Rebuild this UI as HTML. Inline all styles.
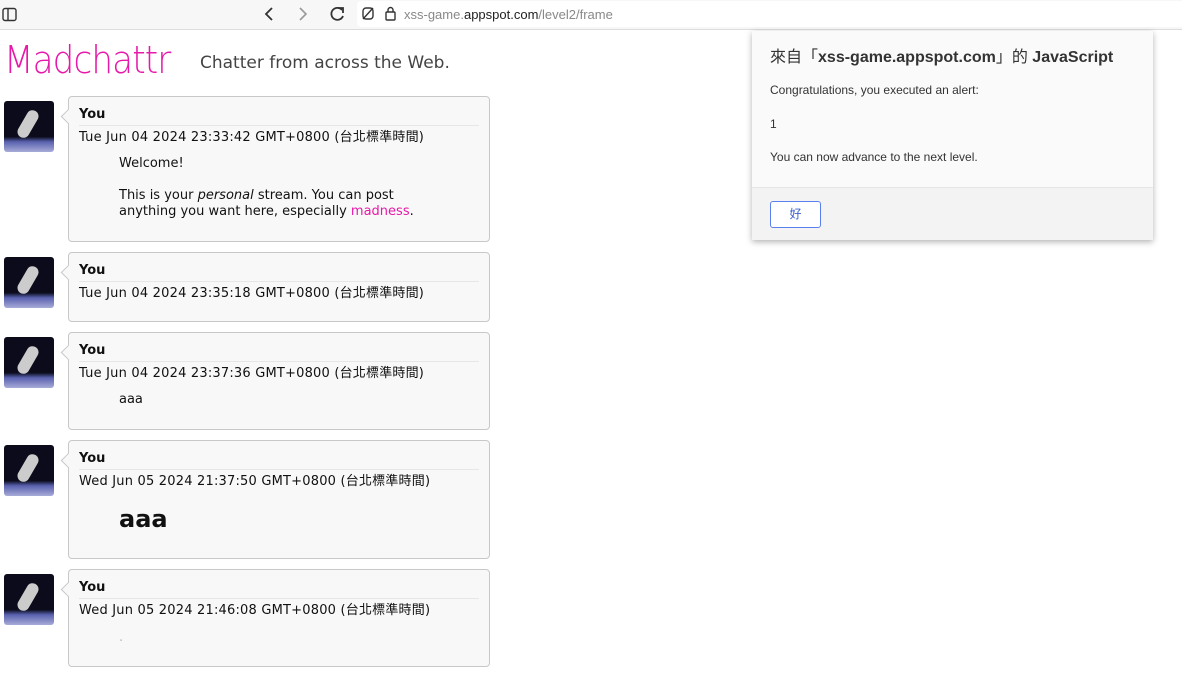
<!DOCTYPE html>
<html><head><meta charset="utf-8"><style>
*{margin:0;padding:0;box-sizing:border-box}
body{width:1182px;height:673px;overflow:hidden;background:#fff;font-family:"DejaVu Sans","Liberation Sans","Noto Sans CJK TC",sans-serif;position:relative}
.bar{position:absolute;left:0;top:0;width:1182px;height:30px;background:#f7f7f7;border-bottom:1px solid #ddd}
.url{position:absolute;left:357px;top:1px;width:825px;height:26px;background:#fff;border-radius:4px 0 0 4px;font:13px "Liberation Sans",sans-serif;color:#888;padding:6px 0 0 47px}
.url b{font-weight:normal;color:#222}
.logo{position:absolute;left:4px;top:38px;font:38px "DejaVu Sans",sans-serif;color:#e619a9;letter-spacing:-1px;transform:scaleX(0.9);transform-origin:left;font-weight:200}
.tag{position:absolute;left:200px;top:53px;font-size:17px;color:#444}
.av{position:absolute;left:4px;width:50px;height:51px;border-radius:3px;background:linear-gradient(#0b0b1c 0 70%,#5a62b0 80%,#a8acd8 100%)}
.av:after{content:"";position:absolute;left:18px;top:8px;width:12px;height:30px;background:#ccc;border-radius:6px;transform:rotate(30deg)}
.post{position:absolute;left:68px;width:422px;background:#f8f8f8;border:1px solid #c8c8c8;border-radius:4px;font-size:13px;color:#111}
.post:before{content:"";position:absolute;left:-6px;top:14px;width:10px;height:10px;background:#f8f8f8;border-left:1px solid #c8c8c8;border-bottom:1px solid #c8c8c8;transform:rotate(45deg)}
.nm{position:absolute;left:10px;top:10px;font-weight:bold;font-size:13px}
.ln{position:absolute;left:10px;right:10px;top:28px;border-top:1px solid #e6e6e6}
.dt{position:absolute;left:10px;top:29px;font-size:13px;letter-spacing:0.2px}
.bd{position:absolute;left:50px;font-size:13px;line-height:16px}
.dlg{position:absolute;left:752px;top:31px;width:401px;height:209px;background:#fafafa;box-shadow:0 2px 6px rgba(0,0,0,.3);font-family:"Liberation Sans","Noto Sans CJK TC",sans-serif;color:#333}
.dlg .t{position:absolute;left:18px;top:12px;font-size:16px}
.dlg p{position:absolute;left:18px;font-size:12px}
.foot{position:absolute;left:0;top:156px;width:100%;height:53px;background:#f3f3f3;border-top:1px solid #e6e6e6}
.btn{position:absolute;left:18px;top:13px;width:51px;height:27px;border:1px solid #5a80f0;border-radius:3px;background:#fff;color:#3a60d0;font-size:12px;text-align:center;line-height:25px}
</style></head><body>
<div class="bar">
<svg style="position:absolute;left:2px;top:7px" width="16" height="16"><rect x="1" y="1.5" width="13" height="12" rx="2" fill="none" stroke="#333" stroke-width="1.4"/><line x1="6" y1="2" x2="6" y2="13" stroke="#333" stroke-width="1.4"/></svg>
<svg style="position:absolute;left:260px;top:5px" width="90" height="18"><path d="M12 3l-6 6 6 6" fill="none" stroke="#333" stroke-width="1.8"/><path d="M40 3l6 6-6 6" fill="none" stroke="#999" stroke-width="1.6"/><path d="M82 5a6 6 0 1 0 1 6" fill="none" stroke="#333" stroke-width="1.8"/><path d="M78 3h5v5" fill="none" stroke="#333" stroke-width="1.8"/></svg>
<div class="url"><b style="color:#888">xss-game.</b><b>appspot.com</b>/level2/frame
<svg style="position:absolute;left:4px;top:5px" width="40" height="16"><rect x="2" y="2" width="10" height="11" rx="3" fill="none" stroke="#333" stroke-width="1.4"/><line x1="2" y1="13" x2="12" y2="2" stroke="#333" stroke-width="1.4"/><rect x="25" y="6" width="9" height="8" rx="1" fill="none" stroke="#333" stroke-width="1.4"/><path d="M27 6v-2a2.5 2.5 0 0 1 5 0v2" fill="none" stroke="#333" stroke-width="1.4"/></svg>
</div>
</div>
<div class="logo">Madchattr</div>
<div class="tag">Chatter from across the Web.</div>

<div class="av" style="top:101px"></div>
<div class="post" style="top:96px;height:146px"><div class="nm">You</div><div class="ln"></div><div class="dt">Tue Jun 04 2024 23:33:42 GMT+0800 (台北標準時間)</div>
<div class="bd" style="top:59px">Welcome!<br><br>This is your <i>personal</i> stream. You can post<br>anything you want here, especially <span style="color:#e619a9">madness</span>.</div></div>

<div class="av" style="top:257px"></div>
<div class="post" style="top:252px;height:70px"><div class="nm">You</div><div class="ln"></div><div class="dt">Tue Jun 04 2024 23:35:18 GMT+0800 (台北標準時間)</div></div>

<div class="av" style="top:337px"></div>
<div class="post" style="top:332px;height:98px"><div class="nm">You</div><div class="ln"></div><div class="dt">Tue Jun 04 2024 23:37:36 GMT+0800 (台北標準時間)</div><div class="bd" style="top:59px">aaa</div></div>

<div class="av" style="top:445px"></div>
<div class="post" style="top:440px;height:119px"><div class="nm">You</div><div class="ln"></div><div class="dt">Wed Jun 05 2024 21:37:50 GMT+0800 (台北標準時間)</div><div class="bd" style="top:64px;font-size:24px;font-weight:bold;line-height:28px">aaa</div></div>

<div class="av" style="top:574px"></div>
<div class="post" style="top:569px;height:98px"><div class="nm">You</div><div class="ln"></div><div class="dt">Wed Jun 05 2024 21:46:08 GMT+0800 (台北標準時間)</div><div class="bd" style="top:60px;color:#bbb">.</div></div>

<div class="dlg">
<div class="t">來自「<b>xss-game.appspot.com</b>」的 <b>JavaScript</b></div>
<p style="top:52px">Congratulations, you executed an alert:</p>
<p style="top:86px">1</p>
<p style="top:119px">You can now advance to the next level.</p>
<div class="foot"><div class="btn">好</div></div>
</div>
</body></html>
